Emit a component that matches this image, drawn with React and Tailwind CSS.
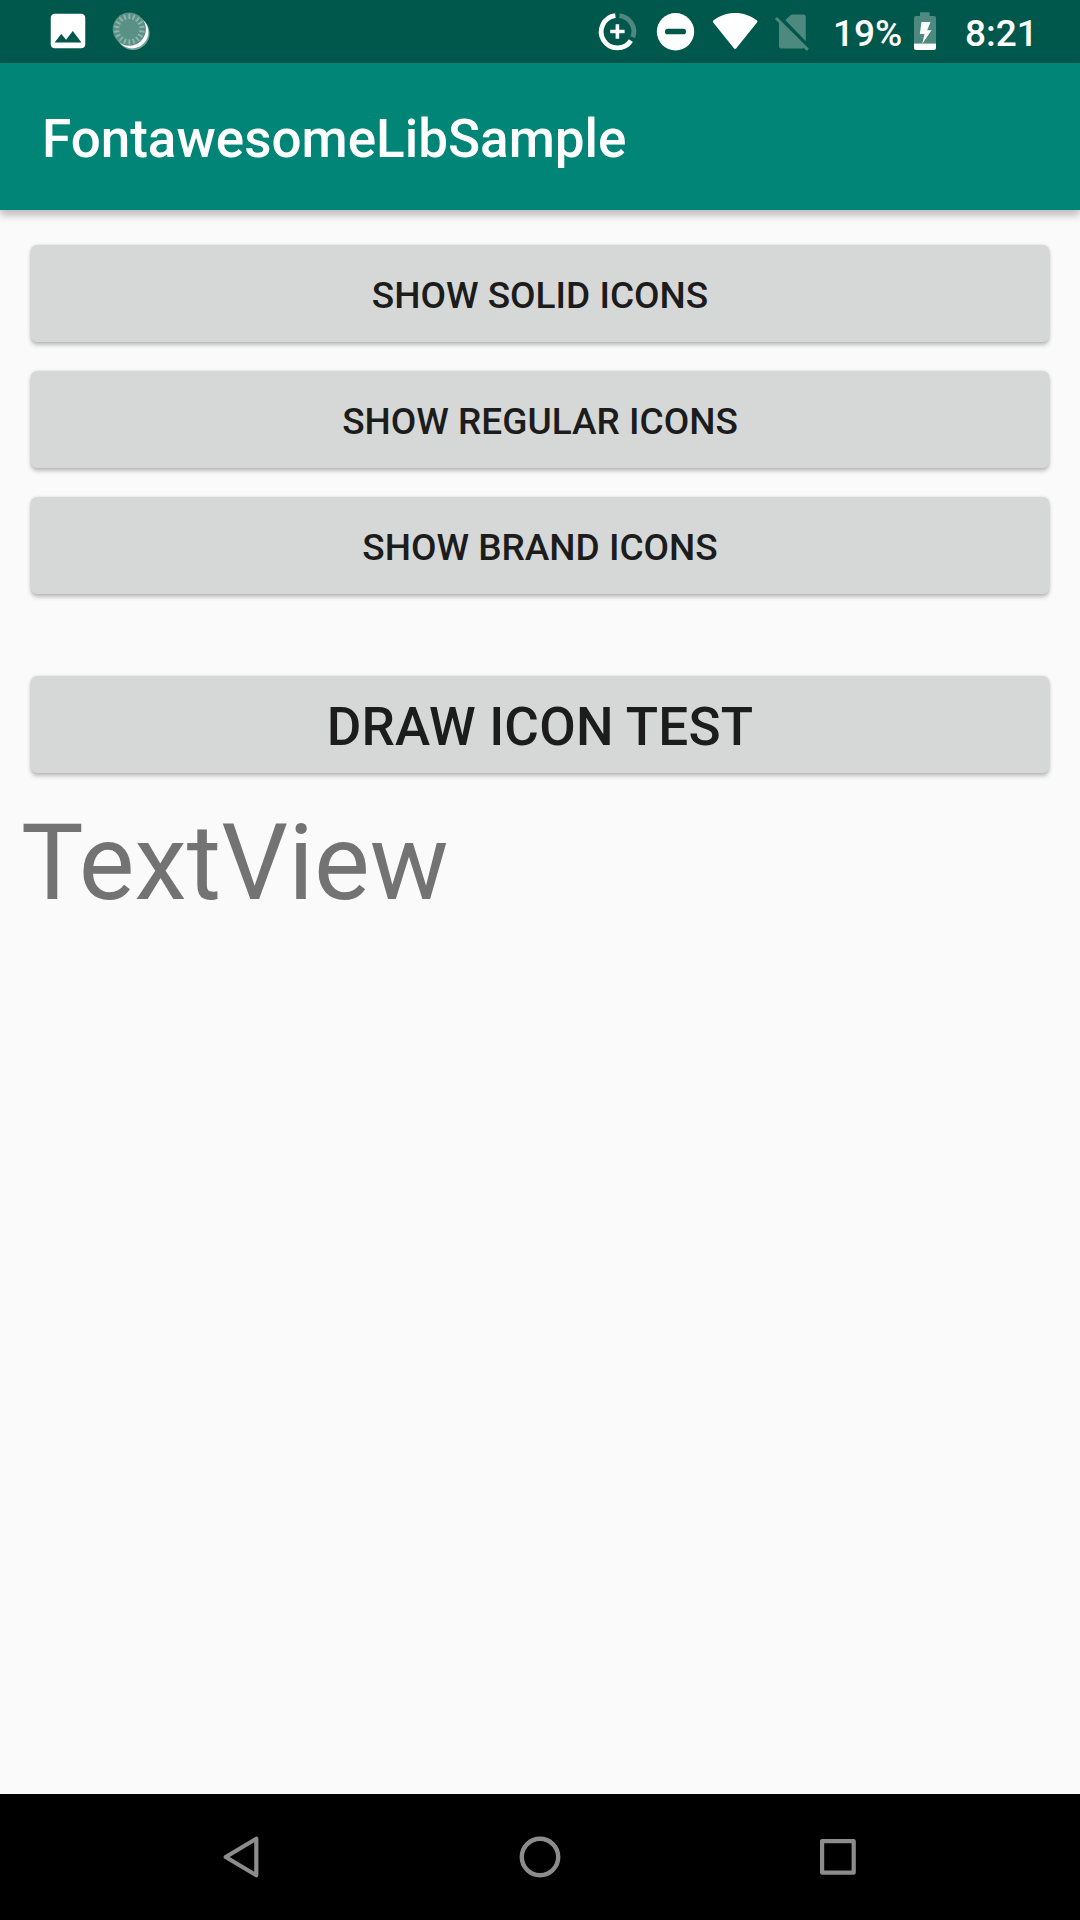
const ticks = Array.from({ length: 18 }, (_, i) => i * 20);

function Spacer({ className }) {
  return <span className={`shrink-0 ${className}`} />;
}

function StatusBar() {
  return (
    <header className="flex h-[63px] items-start bg-[#00574b] text-white">
      <Spacer className="w-[45px]" />
      <svg className="mt-[8px] h-[46px] w-[46px] shrink-0" viewBox="0 0 24 24" fill="currentColor">
        <path d="M21 19V5c0-1.1-.9-2-2-2H5c-1.1 0-2 .9-2 2v14c0 1.1.9 2 2 2h14c1.1 0 2-.9 2-2zM8.5 13.5l2.5 3.01L14.5 12l4.5 6H5l3.5-4.5z" />
      </svg>
      <Spacer className="w-[19px]" />
      <svg className="h-[63px] w-[44px] shrink-0" viewBox="110 0 44 63">
        <circle cx="133" cy="33.3" r="16.6" fill="#ffffff" opacity="0.45" />
        <circle cx="132" cy="32" r="16.4" fill="#ffffff" />
        <circle cx="129.3" cy="29.2" r="16.6" fill="#5a9187" />
        {ticks.map((a) => (
          <line key={a} x1="129.3" y1="13.8" x2="129.3" y2="19" stroke="#8fb4ad" strokeWidth="1.9" transform={`rotate(${a} 129.3 29.2)`} />
        ))}
      </svg>
      <div className="grow" />
      <svg className="h-[63px] w-[230px] shrink-0" viewBox="590 0 230 63" fill="none">
        <path d="M615.4 15.6 A16.2 16.2 0 1 0 630.9 40.6" stroke="#fff" strokeWidth="4.8" />
        <path d="M619.4 15.6 A16.2 16.2 0 0 1 632.9 37.2" stroke="#4d897f" strokeWidth="4.8" />
        <path d="M617.4 24.2V38.8M610.2 31.5H624.6" stroke="#fff" strokeWidth="3.6" />
        <circle cx="675.5" cy="31.7" r="18.7" fill="#fff" />
        <rect x="665" y="28.7" width="21" height="5.6" rx="2.6" fill="#00574b" />
        <path d="M713.3 20.6C719.8 15.5 727 13 735.1 13S750.6 15.5 757 20.6Q757.9 21.4 757 22.5L736.3 48.2Q735.1 49.6 733.9 48.2L713.2 22.5Q712.4 21.4 713.3 20.6Z" fill="#fff" />
        <path d="M785.3 20L790.5 15.2Q791.3 14.4 792.7 14.4H803.3Q805.8 14.4 805.8 17V41.3ZM774.9 19L777 16.9L808.9 48.7L806.8 50.9L804 48.1Q803 48.6 801.4 48.6H781.8Q779 48.6 779 45.8V23.1Z" fill="#4d897f" />
      </svg>
      <Spacer className="w-[13px]" />
      <span className="mt-[12px] w-[68px] shrink-0 whitespace-nowrap text-[37px] leading-[43px] font-medium">19%</span>
      <Spacer className="w-[11px]" />
      <svg className="h-[63px] w-[26px] shrink-0" viewBox="912 0 26 63">
        <path d="M920 12.2H929.7V16H934Q936 16 936 18V43.5H914V18Q914 16 916 16H920Z" fill="#4d897f" />
        <path d="M914 43.5H936V48Q936 50 934 50H916Q914 50 914 48Z" fill="#fff" />
        <path d="M921.5 22H930.5L927.2 30.3H931.5L922.2 44L924.5 34H919.8Z" fill="#fff" />
      </svg>
      <Spacer className="w-[27px]" />
      <span className="mt-[12px] w-[115px] shrink-0 whitespace-nowrap text-[37px] leading-[43px] font-medium">8:21</span>
    </header>
  );
}

function RaisedButton({ children, className }) {
  return (
    <button
      className={`flex h-[97px] w-full shrink-0 items-center justify-center rounded-[6px] bg-[#d6d8d7] font-medium text-[#1c1c1c] shadow-[0_0_3px_rgba(0,0,0,0.12),0_3px_4px_rgba(0,0,0,0.24)] ${className}`}
    >
      {children}
    </button>
  );
}

function NavigationBar() {
  return (
    <nav className="flex h-[126px] shrink-0 items-center justify-between bg-black px-[210px]">
      <svg className="h-[64px] w-[64px]" viewBox="210 1825 64 64" fill="none" stroke="#8c8c8c" strokeWidth="4.2" strokeLinejoin="round">
        <path d="M256.3 1838.7V1875.3L225.7 1857Z" />
      </svg>
      <svg className="h-[64px] w-[64px]" viewBox="508 1825 64 64" fill="none" stroke="#8c8c8c" strokeWidth="4.4">
        <circle cx="540" cy="1857" r="18.2" />
      </svg>
      <svg className="h-[64px] w-[64px]" viewBox="806 1825 64 64" fill="none" stroke="#8c8c8c" strokeWidth="4.2" strokeLinejoin="round">
        <rect x="822.1" y="1841.1" width="31.6" height="31.6" />
      </svg>
    </nav>
  );
}

export default function App() {
  return (
    <div className="flex h-[1920px] w-[1080px] flex-col overflow-hidden bg-[#fafafa] font-[Roboto,sans-serif]">
      <StatusBar />
      <div className="z-10 flex h-[147px] shrink-0 items-start bg-[#008577] pt-[45px] pl-[42px] shadow-[0_5px_8px_rgba(0,0,0,0.26)]">
        <h1 className="text-[53px] leading-[62px] font-medium text-white">FontawesomeLibSample</h1>
      </div>
      <main className="flex grow flex-col px-[31px] pt-[35px]">
        <div className="flex flex-col gap-[29px]">
          <RaisedButton className="pt-[4px] text-[37px] leading-[43px]">SHOW SOLID ICONS</RaisedButton>
          <RaisedButton className="pt-[4px] text-[37px] leading-[43px]">SHOW REGULAR ICONS</RaisedButton>
          <RaisedButton className="pt-[4px] text-[37px] leading-[43px]">SHOW BRAND ICONS</RaisedButton>
        </div>
        <RaisedButton className="mt-[82px] pt-[5px] text-[53px] leading-[62px] tracking-[0.2px]">DRAW ICON TEST</RaisedButton>
        <p className="mt-[29px] -ml-[10px] text-[105px] leading-[123px] tracking-[0.15px] text-[#737373]">TextView</p>
      </main>
      <NavigationBar />
    </div>
  );
}
